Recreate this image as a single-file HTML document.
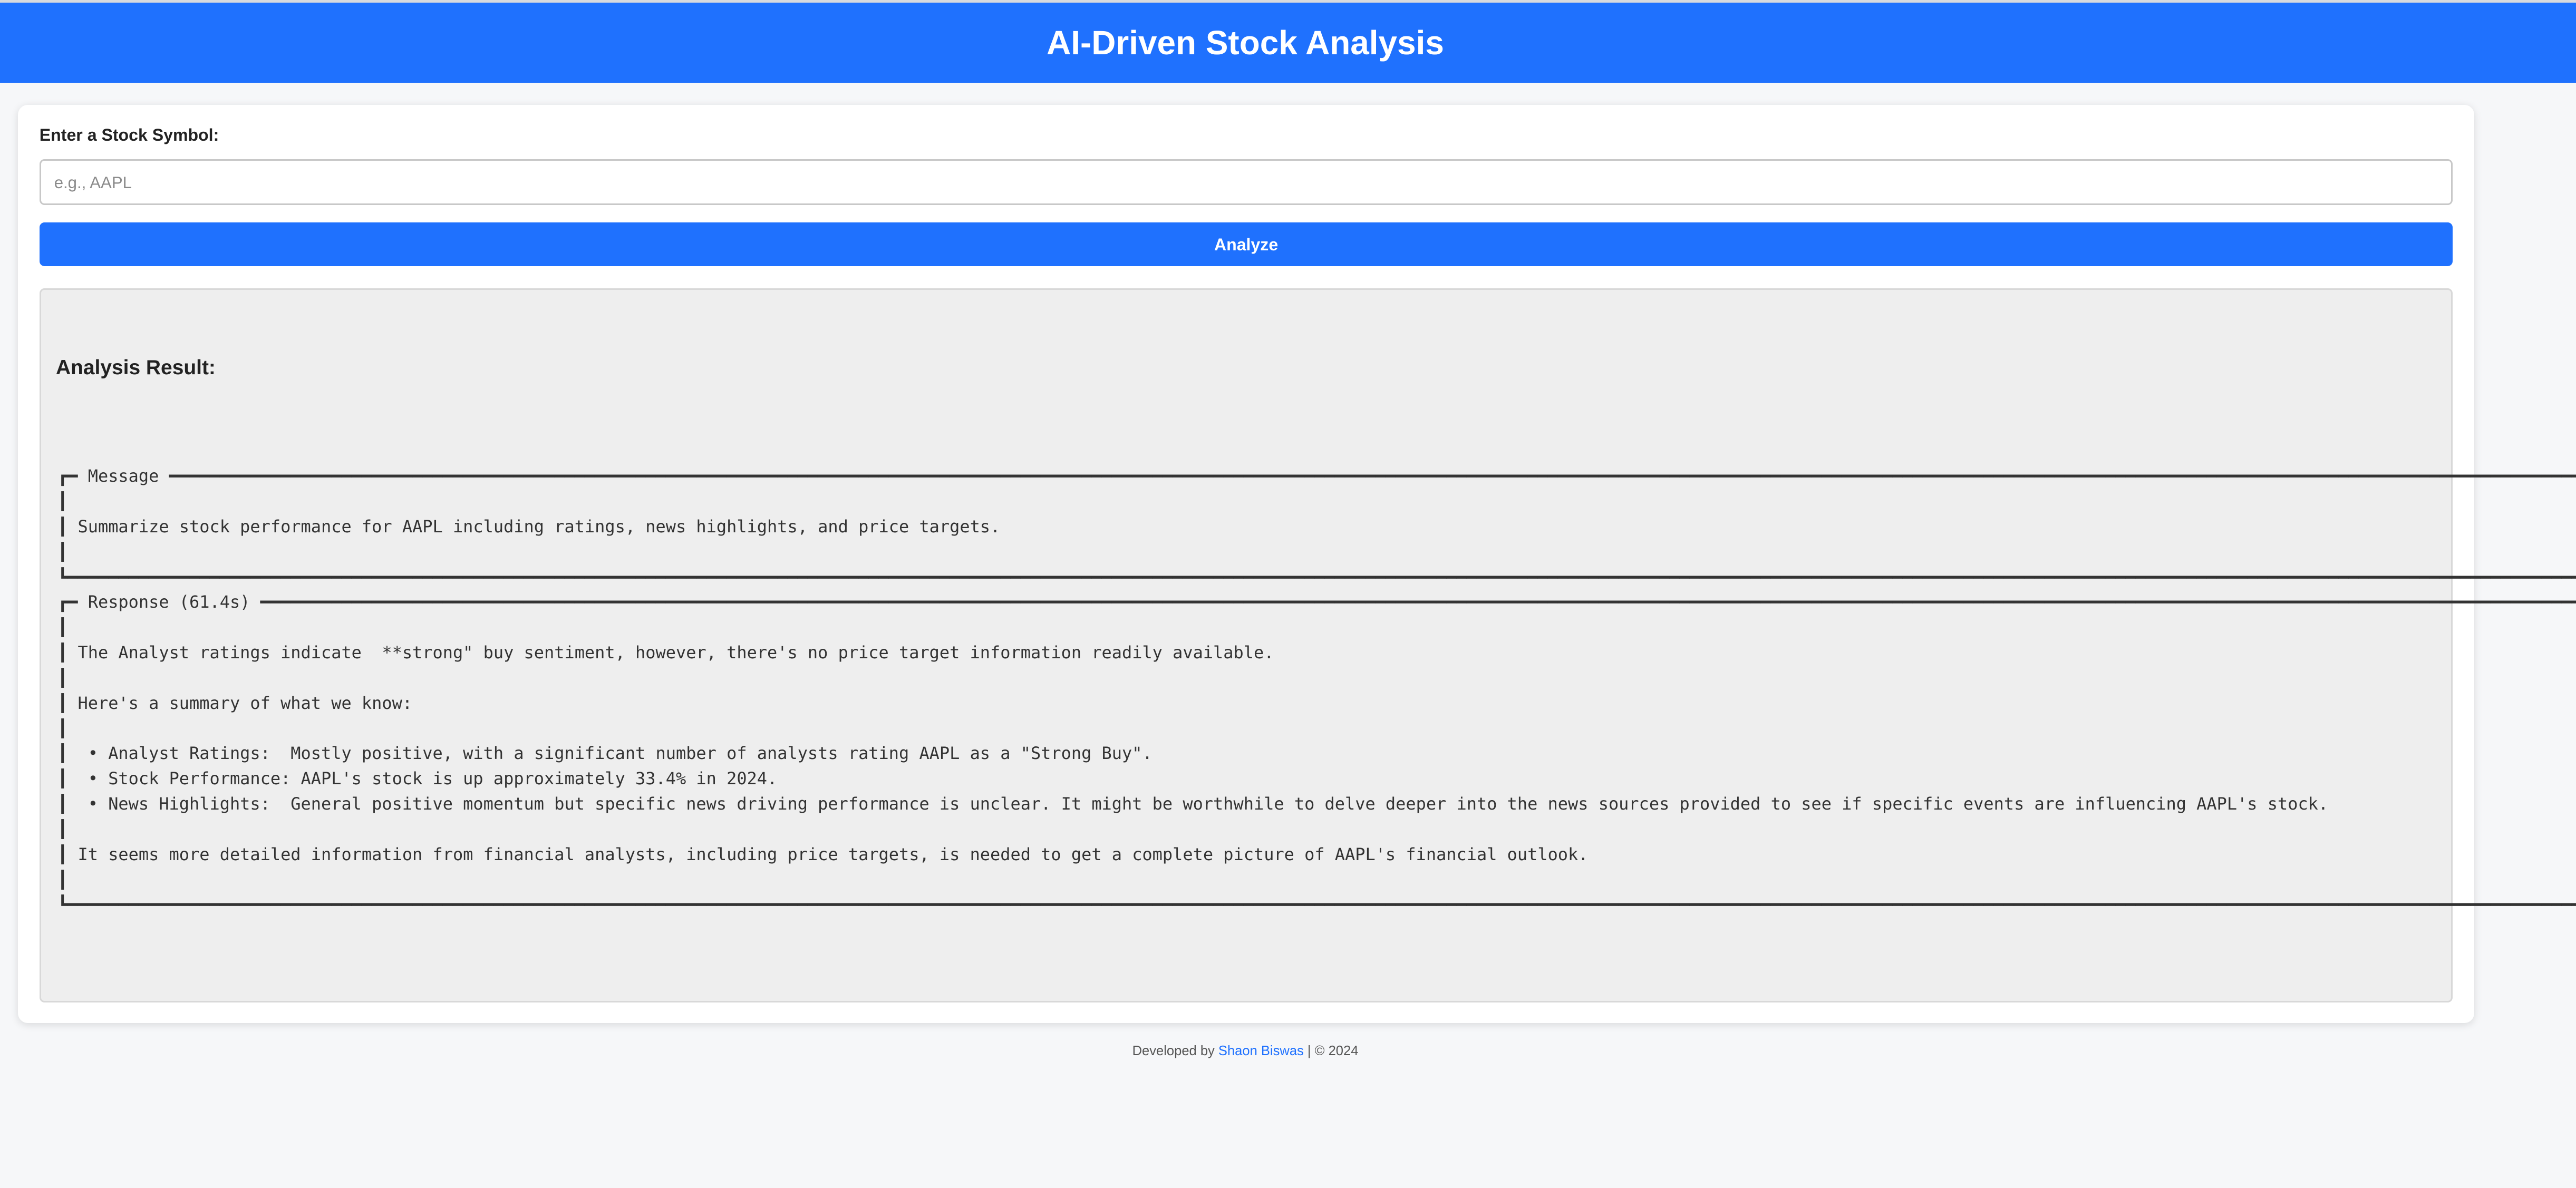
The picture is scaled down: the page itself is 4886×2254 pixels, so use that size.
<!DOCTYPE html>
<html><head><meta charset="utf-8"><style>
html,body{margin:0;padding:0;width:4886px;height:2254px;overflow:hidden;background:#f6f7f9}
#w{zoom:3.1161;width:1568px;height:723px;position:relative;overflow:hidden;font-family:"Liberation Sans",Arial,sans-serif;color:#333}
.top{position:absolute;left:0;top:0;width:1568px;height:1.5px;background:#d8dade}
.hdr{position:absolute;left:0;top:1.5px;width:1568px;height:49px;background:#1f71fe}
.ttl{position:absolute;left:0;top:1.5px;width:1516px;color:#fff;font-weight:bold;font-size:20.5px;text-align:center;line-height:49px}
.card{position:absolute;left:11px;top:64px;width:1495px;height:559px;background:#fff;border-radius:6px;box-shadow:0 1px 5px rgba(0,0,0,.12)}
.lbl{position:absolute;left:24px;top:76.5px;font-size:10.3px;font-weight:bold;color:#222}
.inp{position:absolute;left:24px;top:97px;width:1467px;height:26px;border:1px solid #c8c8c8;border-radius:3px;background:#fff;font-size:10px;color:#8a8a8a;line-height:27px;text-indent:8px;box-sizing:content-box}
.btn{position:absolute;left:24px;top:135.5px;width:1469px;height:26.5px;background:#1f71fe;border-radius:3px;color:#fff;font-weight:bold;font-size:10.3px;text-align:center;line-height:27px}
.res{position:absolute;left:24px;top:175.5px;width:1467px;height:433px;background:#eee;border:1px solid #d8d8d8;border-radius:3px}
.h3{position:absolute;left:34px;top:217px;font-size:12.5px;font-weight:bold;color:#222}
pre{position:absolute;left:35px;top:282.5px;margin:0;font-family:"DejaVu Sans Mono","Liberation Mono",monospace;font-size:10.25px;line-height:15.35px;color:#333;white-space:pre}
.ft{position:absolute;left:0;width:1516px;top:635.5px;text-align:center;font-size:8.2px;color:#555}
.ft span{color:#1f71fe}
</style></head><body><div id="w">
<div class="top"></div>
<div class="hdr"></div>
<div class="ttl">AI-Driven Stock Analysis</div>
<div class="card"></div>
<div class="lbl">Enter a Stock Symbol:</div>
<div class="inp">e.g., AAPL</div>
<div class="btn">Analyze</div>
<div class="res"></div>
<div class="h3">Analysis Result:</div>
<pre>┏━ Message ━━━━━━━━━━━━━━━━━━━━━━━━━━━━━━━━━━━━━━━━━━━━━━━━━━━━━━━━━━━━━━━━━━━━━━━━━━━━━━━━━━━━━━━━━━━━━━━━━━━━━━━━━━━━━━━━━━━━━━━━━━━━━━━━━━━━━━━━━━━━━━━━━━━━━━━━━━━━━━━━━━━━━━━━━━━━━━━━━━━━━━━━━━━━━━━━━━━━━━━━━━━━━━━━━━━━━━━━━━━━━━━━━━━━━━━━━━━━━━━━━━━━━━━━━━━━━━━━━━━━━━━━━━━━━━━━━━━━
┃
┃ Summarize stock performance for AAPL including ratings, news highlights, and price targets.
┃
┗━━━━━━━━━━━━━━━━━━━━━━━━━━━━━━━━━━━━━━━━━━━━━━━━━━━━━━━━━━━━━━━━━━━━━━━━━━━━━━━━━━━━━━━━━━━━━━━━━━━━━━━━━━━━━━━━━━━━━━━━━━━━━━━━━━━━━━━━━━━━━━━━━━━━━━━━━━━━━━━━━━━━━━━━━━━━━━━━━━━━━━━━━━━━━━━━━━━━━━━━━━━━━━━━━━━━━━━━━━━━━━━━━━━━━━━━━━━━━━━━━━━━━━━━━━━━━━━━━━━━━━━━━━━━━━━━━━━━━━━━
┏━ Response (61.4s) ━━━━━━━━━━━━━━━━━━━━━━━━━━━━━━━━━━━━━━━━━━━━━━━━━━━━━━━━━━━━━━━━━━━━━━━━━━━━━━━━━━━━━━━━━━━━━━━━━━━━━━━━━━━━━━━━━━━━━━━━━━━━━━━━━━━━━━━━━━━━━━━━━━━━━━━━━━━━━━━━━━━━━━━━━━━━━━━━━━━━━━━━━━━━━━━━━━━━━━━━━━━━━━━━━━━━━━━━━━━━━━━━━━━━━━━━━━━━━━━━━━━━━━━━━━━━━━━━━━━━━━━━━━
┃
┃ The Analyst ratings indicate  **strong" buy sentiment, however, there's no price target information readily available.
┃
┃ Here's a summary of what we know:
┃
┃  • Analyst Ratings:  Mostly positive, with a significant number of analysts rating AAPL as a "Strong Buy".
┃  • Stock Performance: AAPL's stock is up approximately 33.4% in 2024.
┃  • News Highlights:  General positive momentum but specific news driving performance is unclear. It might be worthwhile to delve deeper into the news sources provided to see if specific events are influencing AAPL's stock.
┃
┃ It seems more detailed information from financial analysts, including price targets, is needed to get a complete picture of AAPL's financial outlook.
┃
┗━━━━━━━━━━━━━━━━━━━━━━━━━━━━━━━━━━━━━━━━━━━━━━━━━━━━━━━━━━━━━━━━━━━━━━━━━━━━━━━━━━━━━━━━━━━━━━━━━━━━━━━━━━━━━━━━━━━━━━━━━━━━━━━━━━━━━━━━━━━━━━━━━━━━━━━━━━━━━━━━━━━━━━━━━━━━━━━━━━━━━━━━━━━━━━━━━━━━━━━━━━━━━━━━━━━━━━━━━━━━━━━━━━━━━━━━━━━━━━━━━━━━━━━━━━━━━━━━━━━━━━━━━━━━━━━━━━━━━━━━━</pre>
<div class="ft">Developed by <span>Shaon Biswas</span> | © 2024</div>
</div></body></html>
